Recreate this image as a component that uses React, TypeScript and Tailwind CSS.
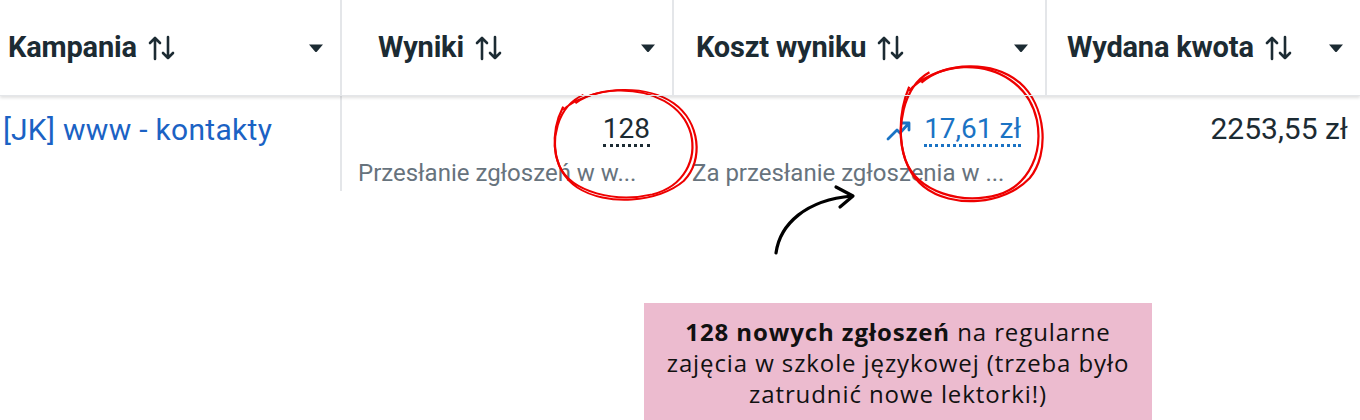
import React from 'react';

const SortIcon: React.FC = () => (
  <svg width="30" height="28" viewBox="0 0 30 28" className="shrink-0">
    <path d="M8 25V4M3 9l5-5 5 5" fill="none" stroke="#1c2b33" strokeWidth="2.6" strokeLinecap="round" strokeLinejoin="round" />
    <path d="M21 3v21M16 19l5 5 5-5" fill="none" stroke="#1c2b33" strokeWidth="2.6" strokeLinecap="round" strokeLinejoin="round" />
  </svg>
);

const Caret: React.FC = () => (
  <svg width="16" height="10" viewBox="0 0 16 10" className="shrink-0">
    <path d="M1 1.5h14L9 8.5a1.4 1.4 0 0 1-2 0z" fill="#1c2b33" />
  </svg>
);

const HeaderCell: React.FC<{ label: string; pl: string; border?: boolean }> = ({ label, pl, border }) => (
  <div className={`flex items-center h-[95px] pr-4 ${pl} ${border ? 'border-r-2 border-[#e4e6e9]' : ''}`}>
    <span className="text-[29px] font-bold text-[#1c2b33] tracking-[-0.2px]">{label}</span>
    <span className="ml-2.5">
      <SortIcon />
    </span>
    <span className="ml-auto">
      <Caret />
    </span>
  </div>
);

const Circle: React.FC<{ className: string }> = ({ className }) => (
  <svg viewBox="0 0 150 135" preserveAspectRatio="none" className={`absolute pointer-events-none ${className}`}>
    <path d="M16 22C4 50 2 95 30 118c28 22 80 18 105-8 20-24 16-70-10-92C98-4 52-2 28 18" fill="none" stroke="#e00" strokeWidth="2.2" />
    <path d="M36 8C10 22 2 62 12 92c12 32 56 44 92 34 32-10 44-42 38-72C134 20 104 2 70 3 48 4 26 14 16 26" fill="none" stroke="#e00" strokeWidth="2.2" />
  </svg>
);

const App: React.FC = () => {
  return (
    <div className="relative w-[1360px] h-[420px] bg-white overflow-hidden" style={{ fontFamily: 'Roboto, "Noto Sans", sans-serif' }}>
      {/* header */}
      <div className="grid grid-cols-[342px_332px_373px_313px] shadow-[0_2px_3px_rgba(0,0,0,0.12)] border-b border-[#e4e6e9] relative z-10">
        <HeaderCell label="Kampania" pl="pl-2" border />
        <HeaderCell label="Wyniki" pl="pl-9" border />
        <HeaderCell label="Koszt wyniku" pl="pl-[22px]" border />
        <HeaderCell label="Wydana kwota" pl="pl-5" />
      </div>

      {/* data row */}
      <div className="grid grid-cols-[342px_332px_373px_313px] h-[95px]">
        <div className="border-r-2 border-[#e4e6e9] pl-[3px] pt-[17px]">
          <span className="text-[30px] leading-[34px] tracking-[0.3px] text-[#1b62c4]">[JK] www - kontakty</span>
        </div>
        <div className="flex flex-col items-end pr-6 pt-[18px] pl-4">
          <span className="text-[28px] text-[#1c2b33] leading-[30px] border-b-[3px] border-dotted border-[#1c2b33]">128</span>
          <span className="self-start text-[24px] leading-[30px] text-[#67737d] mt-[11px] whitespace-nowrap">Przesłanie zgłoszeń w w...</span>
        </div>
        <div className="flex flex-col items-end pr-[26px] pt-[18px] pl-[18px]">
          <div className="flex items-center gap-3">
            <svg width="26" height="22" viewBox="0 0 26 22">
              <path d="M2 19l9-9 3 3 9-10M16 3h7v7" fill="none" stroke="#1a73c4" strokeWidth="2.8" strokeLinecap="round" strokeLinejoin="round" />
            </svg>
            <span className="text-[28px] text-[#1a73c4] leading-[30px] border-b-[3px] border-dotted border-[#1a73c4]">17,61 zł</span>
          </div>
          <span className="self-start text-[24px] leading-[30px] text-[#67737d] mt-[11px] whitespace-nowrap">Za przesłanie zgłoszenia w ...</span>
        </div>
        <div className="flex justify-end pr-3 pt-[18px]">
          <span className="text-[30px] text-[#1c2b33] leading-[30px]">2253,55 zł</span>
        </div>
      </div>

      {/* note */}
      <div className="ml-[644px] mt-[112px] w-[508px] h-[130px] bg-[#ecbbcf] pt-[13px] text-center text-[24px] leading-[31px] tracking-[0.9px] text-[#111]" style={{ fontFamily: '"Open Sans", sans-serif' }}>
        <b className="font-bold">128 nowych zgłoszeń</b> na regularne<br />
        zajęcia w szkole językowej (trzeba było<br />
        zatrudnić nowe lektorki!)
      </div>

      {/* annotations */}
      <Circle className="left-[547px] top-[88px] w-[152px] h-[114px]" />
      <Circle className="left-[893px] top-[64px] w-[152px] h-[140px]" />
      <svg width="100" height="80" viewBox="0 0 100 80" className="absolute left-[766px] top-[184px] pointer-events-none">
        <path d="M10 69C14 40 40 16 86 12" fill="none" stroke="#000" strokeWidth="3.2" strokeLinecap="round" />
        <path d="M70 3L87 12 74 23" fill="none" stroke="#000" strokeWidth="3.2" strokeLinecap="round" strokeLinejoin="round" />
      </svg>
    </div>
  );
};

export default App;
